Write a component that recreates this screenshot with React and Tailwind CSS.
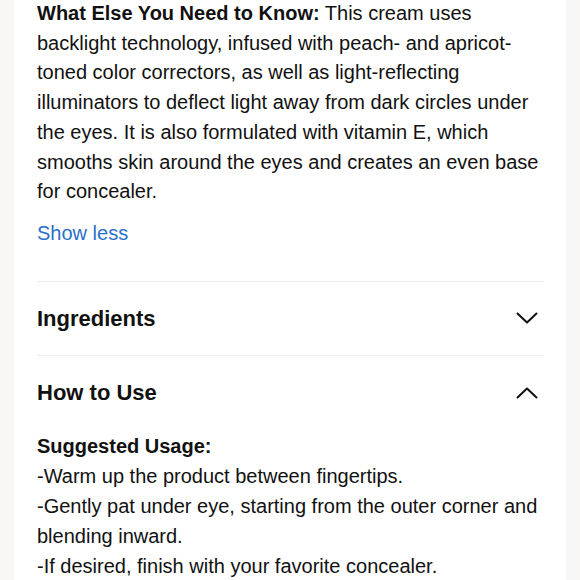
const ChevronDown = () => (
  <svg width="22" height="12" viewBox="0 0 22 12" fill="none">
    <path d="M1.5 1.5 L11 10.5 L20.5 1.5" stroke="#111" strokeWidth="2" strokeLinecap="round" strokeLinejoin="round" />
  </svg>
);

const ChevronUp = () => (
  <svg width="22" height="12" viewBox="0 0 22 12" fill="none">
    <path d="M1.5 10.5 L11 1.5 L20.5 10.5" stroke="#111" strokeWidth="2" strokeLinecap="round" strokeLinejoin="round" />
  </svg>
);

export default function App() {
  return (
    <div className="flex h-[580px] w-[580px] overflow-hidden bg-[#f9f6f6] font-['Liberation_Sans',Arial,sans-serif] text-[#111]">
      <div className="ml-[14px] w-[552px] bg-white pl-[23px] pr-[22px]">
        <p className="-mt-[1px] text-[20px] leading-[29.7px]">
          <span className="font-bold">What Else You Need to Know:</span> This cream uses backlight technology, infused with peach- and apricot-toned color correctors, as well as light-reflecting illuminators to deflect light away from dark circles under the eyes. It is also formulated with vitamin E, which smooths skin around the eyes and creates an even base for concealer.
        </p>
        <button className="mt-[12px] text-[20px] leading-[29px] text-[#2b6fcb]">Show less</button>
        <div className="mt-[33px] border-t border-[#ececec]" />
        <div className="flex h-[73px] items-center justify-between">
          <h3 className="text-[22px] font-bold">Ingredients</h3>
          <span className="mr-[6px]"><ChevronDown /></span>
        </div>
        <div className="border-t border-[#ececec]" />
        <div className="flex h-[74px] items-center justify-between">
          <h3 className="text-[22px] font-bold">How to Use</h3>
          <span className="mr-[6px]"><ChevronUp /></span>
        </div>
        <div className="mt-[1px] text-[20px] leading-[30px]">
          <p className="font-bold">Suggested Usage:</p>
          <p>-Warm up the product between fingertips.</p>
          <p>-Gently pat under eye, starting from the outer corner and blending inward.</p>
          <p>-If desired, finish with your favorite concealer.</p>
        </div>
      </div>
    </div>
  );
}
